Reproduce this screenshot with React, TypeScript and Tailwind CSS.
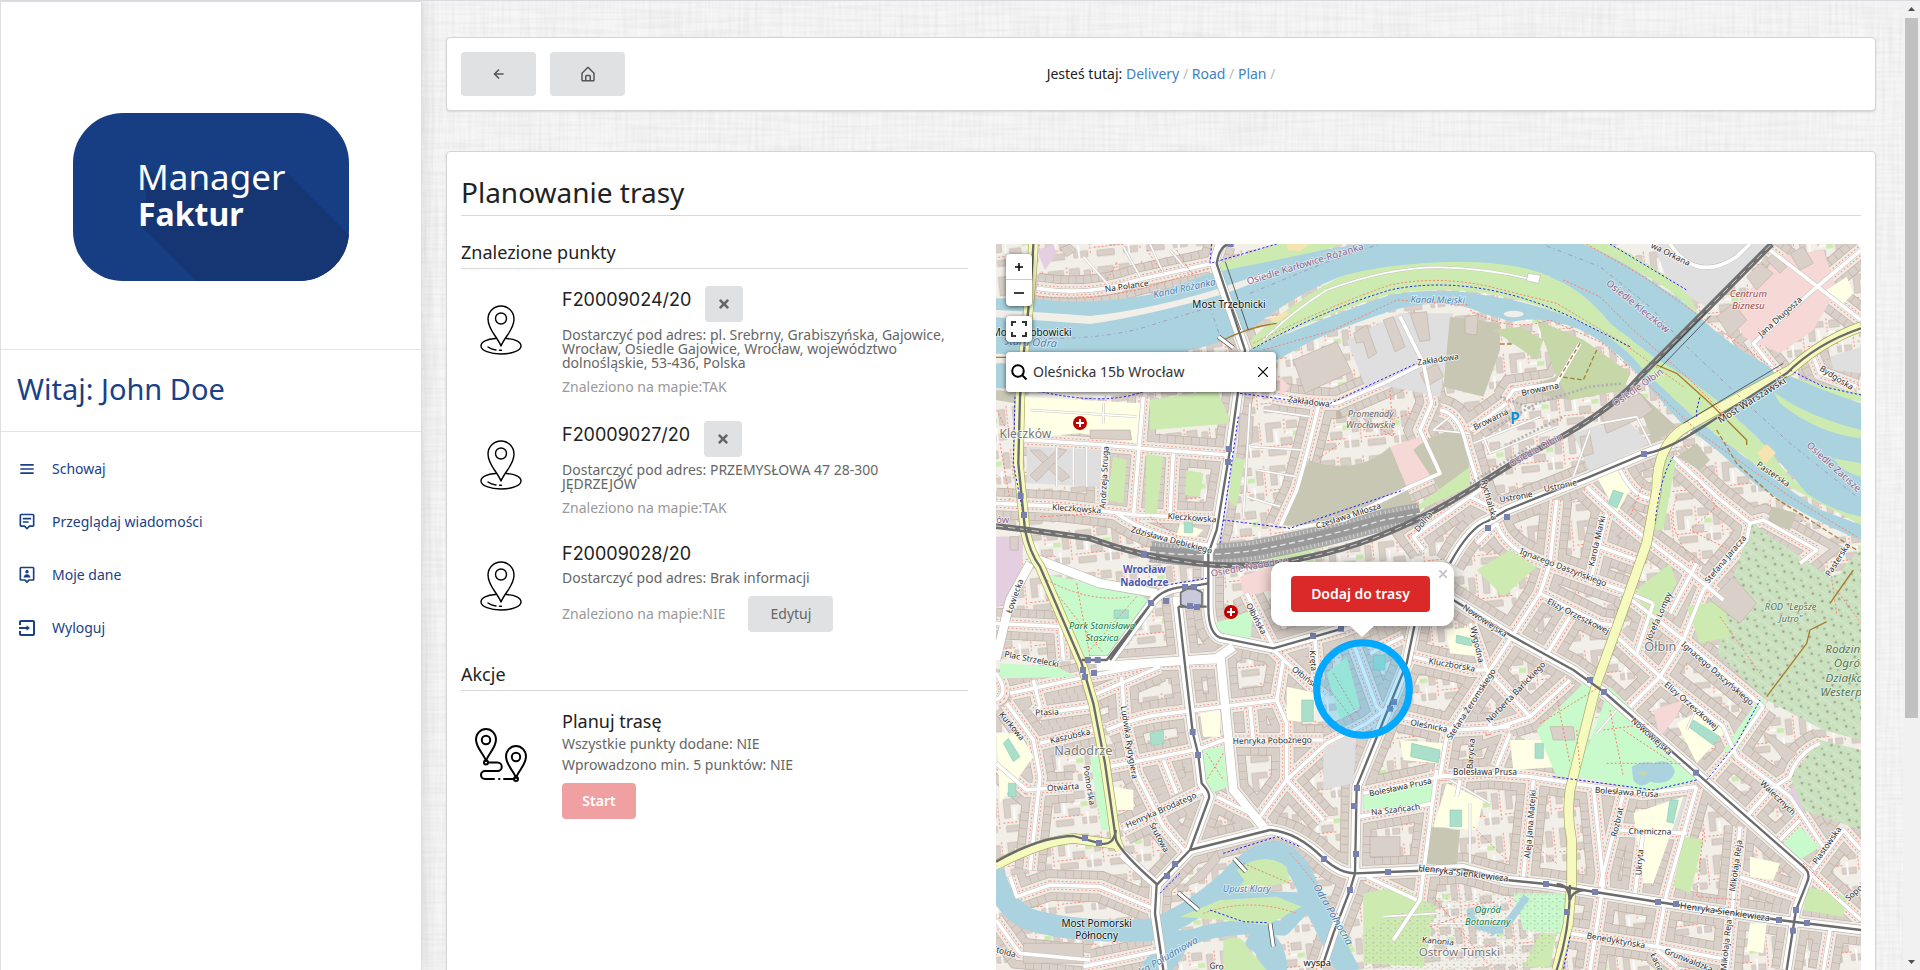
import type { ReactNode } from 'react';
import { BiHomeAlt, BiLeftArrowAlt, BiMenu, BiMessageAltDetail, BiUserPin } from 'react-icons/bi';
import { FaTimes } from 'react-icons/fa';

/* ---------- map data (coordinates are thirds of a pixel) ---------- */

const WATER = [
  'M18 205 L140 207 Q300 230 500 190 L660 130 Q860 90 1000 60 L1110 42 H1780 Q1900 90 2010 170 Q2080 210 2130 262 Q2220 350 2340 410 Q2460 470 2613 520 V860 Q2520 840 2450 790 Q2390 720 2300 620 L2180 510 Q2060 420 1990 380 L1860 280 Q1790 190 1700 150 Q1600 95 1400 95 Q1180 100 1050 140 Q900 200 780 300 Q680 350 520 375 Q300 400 130 385 L18 370 Z',
  'M765 365 Q980 270 1200 195 Q1350 170 1480 195 Q1660 220 1800 290 Q1900 340 1960 420 L2110 560 Q2260 680 2350 745 L2480 835 L2613 885 V930 Q2480 880 2300 765 L2180 660 L2070 575 L1940 430 Q1860 340 1760 295 Q1650 255 1570 275 Q1500 260 1440 235 Q1340 205 1210 240 Q1060 290 960 335 L860 390 Z',
  'M18 400 H48 V475 H18 Z',
];

const GREEN = [
  'M780 330 Q900 220 1050 140 Q1180 95 1400 92 Q1600 92 1700 150 Q1790 190 1860 280 L1990 380 Q2080 420 2190 520 L2300 620 L2400 740 Q2500 835 2613 860 V885 L2350 745 L2110 560 L1960 420 Q1880 330 1800 290 Q1650 215 1480 188 Q1350 170 1200 192 Q980 260 790 355 Z',
  'M1780 42 H1860 Q2010 110 2100 200 L2130 262 Q2060 190 1990 150 Z',
  'M690 100 L860 42 H1060 Q900 90 690 140 Z',
  'M480 510 L680 480 L725 580 L480 600 Z',
  'M470 670 L520 680 L500 850 L465 850 Z',
  'M590 720 L640 730 L630 800 L585 795 Z',
  'M700 945 L890 930 Q1140 900 1250 850 L1440 710 L1440 770 L1200 880 L900 990 L700 990 Z',
  'M370 680 L410 690 L400 820 L350 810 Z',
  'M730 680 L765 690 L740 830 L715 810 Z',
  'M2420 490 Q2500 560 2613 590 V625 Q2500 620 2420 540 Z',
  'M2530 690 L2613 700 V740 Q2560 730 2530 690 Z',
  'M2000 680 L2060 680 L2020 900 L1990 900 Z',
  'M2390 440 L2613 490 L2613 515 L2400 470 Z',
  'M1460 1020 L1560 960 L1640 1010 L1540 1100 Z',
  'M1940 1080 L2040 1000 L2060 1060 L1980 1200 Z',
  'M2090 1130 L2200 1110 L2220 1220 L2130 1240 Z',
  'M740 1920 L860 1870 L960 1960 L1090 2150 L1050 2160 L960 2000 L900 1890 L700 2010 Z',
  'M600 2050 L820 1980 L900 2010 L920 2050 L820 2080 L640 2060 Z',
  'M760 1900 L880 1890 L900 1960 L780 1970 Z',
  'M2080 1820 L2140 1830 L2100 1990 L2050 1970 Z',
  'M1650 2110 L1700 2110 L1680 2210 L1600 2210 Z',
  'M1120 1990 L1220 1970 L1340 2030 L1300 2210 L1120 2200 Z',
  'M2450 1970 L2570 2000 L2560 2060 L2440 2040 Z',
];

const PARK = [
  'M150 1030 L450 1090 L480 1120 L360 1285 L290 1290 L220 1150 Z',
  'M1770 1370 Q1800 1320 1840 1350 L1770 1640 L1700 1640 L1640 1500 Z',
  'M1860 1370 L2120 1630 L2120 1650 L2000 1690 L1760 1640 Z',
  'M640 1560 L700 1550 L715 1670 L660 1690 L640 1640 Z',
  'M675 1180 L790 1140 L780 1240 L700 1230 Z',
  'M300 1580 L340 1580 L365 1800 L335 1800 Z',
  'M1120 1700 L1330 1640 L1320 1720 L1120 1740 Z',
  'M1570 1990 L1730 1990 L1720 2110 L1600 2100 Z',
  'M1010 1330 L1070 1280 L1110 1430 L1050 1470 Z',
  'M2200 1560 L2310 1400 L2330 1420 L2230 1580 Z',
  'M2380 1840 L2430 1790 L2490 1850 L2430 1890 Z',
  'M30 1300 L200 1310 L260 1340 L30 1345 Z',
];

const MEADOW = [
  'M955 690 Q1100 740 1200 650 L1270 820 L1100 900 L880 885 Z',
  'M1380 260 L1530 280 L1530 360 L1480 500 L1360 470 Z',
  'M1640 270 L1780 330 L1920 430 L1900 480 L1740 510 L1580 480 L1700 440 Z',
  'M1270 660 Q1360 580 1430 620 L1440 730 L1350 780 Z',
  'M1940 480 L2060 590 L1990 640 L1960 560 Z',
  'M2060 680 L2120 640 L2160 690 L2130 720 Z',
  'M1310 1790 L1410 1800 L1400 1910 L1300 1900 Z',
  'M18 480 L80 490 L75 520 L18 510 Z',
  'M2350 830 L2420 850 L2400 900 L2330 880 Z',
];

const GREY = [
  'M1070 330 L1230 250 L1390 250 L1350 500 L1200 470 L1130 480 Z',
  'M110 650 L330 660 L330 770 L110 760 Z',
  'M1990 42 L2340 42 L2150 230 L2040 170 Z',
  'M2520 380 L2613 350 V430 L2530 420 Z',
  'M1750 610 L1900 560 L1980 640 L1800 730 Z',
  'M1000 1560 L1100 1500 L1090 1660 L1000 1680 Z',
  'M2220 1080 L2300 1060 L2330 1100 L2280 1160 Z',
  'M2000 1720 L2090 1700 L2060 1800 L1990 1790 Z',
];

const PINK = [
  'M1200 650 L1290 620 L1350 740 L1250 770 Z',
  'M2230 240 L2360 80 L2500 60 L2540 180 L2470 300 L2370 370 L2260 320 Z',
  'M870 440 L900 470 L870 500 Z',
  'M1990 1440 L2080 1410 L2060 1460 L2010 1520 Z',
  'M750 1040 L840 1010 L850 1080 L760 1100 Z',
];

const LILAC = ['M18 920 L100 920 L95 1040 L60 1120 L18 1130 Z', 'M140 60 L190 42 L200 70 L165 120 Z', 'M2390 1690 L2420 1660 L2460 1730 L2440 1750 Z'];

const SCHOOL = [
  'M105 500 L450 520 L440 640 L270 610 L100 625 Z',
  'M630 1450 L690 1440 L690 1520 L640 1520 Z',
  'M890 1370 L980 1390 L970 1480 L890 1470 Z',
  'M1370 1660 L1480 1710 L1460 1800 L1330 1790 Z',
  'M1230 1530 L1360 1540 L1340 1600 L1240 1590 Z',
  'M2060 1480 L2130 1440 L2210 1500 L2120 1600 Z',
  'M1820 740 L1890 720 L1920 780 L1880 850 Z',
  'M1560 1530 L1730 1530 L1710 1610 L1570 1620 Z',
  'M1930 1750 L2080 1700 L2060 1760 L1990 1960 L1960 1960 Z',
  'M2280 1880 L2370 1900 L2350 1950 L2280 1940 Z',
  'M2280 2080 L2330 2080 L2320 2170 L2270 2160 Z',
  'M2510 180 L2570 140 L2590 190 L2550 230 Z',
  'M20 1510 L90 1510 L130 1580 L30 1720 Z',
  'M1370 1200 L1450 1190 L1480 1280 L1380 1270 Z',
  'M370 1670 L430 1680 L430 1740 L380 1740 Z',
  'M570 880 L640 900 L620 920 L560 915 Z',
];

const PITCH = [
  'M935 1410 H970 V1475 H935 Z',
  'M372 1140 H415 V1165 H372 Z',
  'M480 1510 L520 1500 L522 1540 L484 1548 Z',
  'M1265 1540 L1350 1560 L1345 1598 L1262 1580 Z',
  'M1380 1740 H1415 V1790 H1380 Z',
  'M1635 1540 H1660 V1585 H1635 Z',
  'M2110 1470 L2190 1520 L2170 1545 L2095 1490 Z',
  'M1870 780 L1900 790 L1880 835 L1855 820 Z',
  'M583 878 H608 V908 H583 Z',
  'M40 1540 L55 1525 L90 1580 L70 1595 Z',
  'M55 1660 H78 V1700 H55 Z',
  'M1400 1215 L1450 1228 L1445 1248 L1398 1238 Z',
  'M1150 1275 H1185 V1320 H1150 Z',
  'M2040 1710 L2065 1710 L2050 1780 L2030 1775 Z',
];

const LARGE_BUILDINGS = [
  'M910 390 L1040 335 L1085 425 L945 490 Z',
  'M1090 310 L1130 285 L1160 370 L1135 385 L1120 335 L1100 340 Z',
  'M1180 270 L1210 260 L1245 350 L1215 365 Z',
  'M1260 250 L1310 245 L1320 330 L1290 335 Z',
  'M1290 430 L1340 400 L1360 440 L1310 470 Z',
  'M1425 260 L1465 255 L1460 315 L1425 310 Z',
  'M300 600 L420 600 L425 630 L300 625 Z',
  'M120 660 L150 660 L240 740 L215 755 Z',
  'M230 660 L205 655 L120 735 L140 755 Z',
  'M750 550 L790 560 L785 640 L745 650 Z',
  'M1830 540 L1950 490 L1990 540 L1960 560 L1850 610 Z',
  'M1770 620 L1800 615 L1810 670 L1780 680 Z',
  'M2270 140 L2310 100 L2350 130 L2300 180 Z',
  'M2330 90 L2350 70 L2390 110 L2370 130 Z',
  'M2400 70 L2440 50 L2470 100 L2430 120 Z',
  'M2180 260 L2230 220 L2270 270 L2220 320 Z',
  'M60 920 H85 V960 H60 Z',
  'M1680 1490 L1750 1490 L1755 1530 L1690 1530 Z',
  'M210 55 L240 42 L260 60 L230 80 Z',
  'M2160 1110 L2230 1040 L2300 1120 L2250 1180 Z',
  'M580 1970 L600 1950 L650 1900 L680 1860 L690 1890 L640 1950 Z',
  'M100 2140 H280 V2200 H100 Z',
  'M1140 1820 H1230 V1880 H1140 Z',
  'M2310 1500 L2350 1520 L2420 1570 L2390 1600 Z',
];

// residential streets; rows of houses are drawn along both kerbs
const STREETS = [
  'M100 630 Q300 640 450 655 L715 675', 'M18 820 L220 830 L440 855 L690 865', 'M460 500 L430 860', 'M550 670 L540 850',
  'M380 850 Q450 900 560 930 L680 950', 'M340 640 L335 820', 'M985 530 Q950 680 920 780 L870 890', 'M850 500 Q950 520 1040 520 L1180 460 L1300 400',
  'M18 1180 L210 1190 M210 1170 L220 1290', 'M18 1330 Q60 1390 18 1410 M60 1390 L290 1340 L500 1300 L680 1295', 'M300 1400 L510 1310',
  'M50 1420 L130 1530 L150 1640 L120 1920', 'M130 1350 L150 1430 L130 1450 M150 1450 L300 1430', 'M150 1540 L310 1500', 'M18 1600 L110 1680 L250 1670',
  'M395 1340 L405 1480 L440 1630 L520 1790 L590 1870', 'M350 1500 Q440 1460 540 1450 L700 1430 L860 1410', 'M360 1610 L610 1560', 'M400 1800 L500 1750 L640 1680',
  'M520 1590 L560 1690', 'M860 1410 L880 1290 M860 1410 L890 1480 L890 1650', 'M620 1560 L700 1530 L1000 1530', 'M890 1650 L1010 1540 L1130 1480 L1210 1420',
  'M890 1650 L810 1760 M890 1650 L1000 1770', 'M780 1430 L790 1530', 'M1120 1690 L1350 1640 L1400 1635', 'M1110 1760 L1330 1720', 'M1340 1620 L1290 2010 L1210 2130',
  'M850 1260 L1000 1400 M850 1260 L1060 1200', 'M770 1090 L850 1250', 'M975 1230 L985 1350', 'M1090 1240 L1160 1430 L1200 1460', 'M1270 1280 L1440 1320 L1490 1320',
  'M1230 1460 L1400 1500 L1560 1490', 'M1440 1180 L1490 1320 L1620 1460', 'M1650 1090 L1500 1320 L1370 1520 L1350 1640', 'M1740 1350 L1620 1460 L1500 1500 L1500 1480', 'M1560 1510 L1520 1610',
  'M1350 1640 L1500 1630 L1620 1640 L1750 1660 L1960 1690 L2120 1670', 'M1410 1650 L1400 1700', 'M1630 1650 L1600 1940', 'M1810 1670 L1840 1960 L1800 2220', 'M1900 1690 L1830 1970',
  'M1960 1800 L1935 1990', 'M2120 1670 L2030 1990 L2000 2150', 'M1890 1800 L2090 1810', 'M2250 1790 L2210 2220', 'M2160 1640 L2230 1560 L2320 1430', 'M1920 1430 L2010 1340 L2080 1230 L2140 1080',
  'M1880 1220 L2010 1340 L2200 1490 L2240 1580 L2400 1700 L2500 1850', 'M1900 1090 L2080 1230 L2320 1430', 'M2270 1760 L2340 1680 L2400 1640 Q2420 1570 2490 1540', 'M2370 1830 L2430 1770',
  'M1990 1120 L1940 1270', 'M1650 1090 L1830 1180 L1900 1190', 'M1700 810 L1680 1000 L1650 1090', 'M1520 880 Q1540 950 1640 990 L1920 1090 L1990 1120', 'M1740 1160 L1660 1290',
  'M1790 770 Q1900 880 2080 1010 L2200 1110', 'M1850 850 L1800 1060', 'M1890 720 Q1930 800 1980 805', 'M1830 950 L1940 990', 'M2050 680 L2180 800 L2280 880 L2270 930 L2140 1080 M2280 880 L2320 870 L2480 960 L2430 1000',
  'M2120 1000 L2040 1150', 'M1350 540 Q1410 550 1430 650 L1470 780 L1440 800', 'M1300 400 L1325 520 L1290 600 L1350 730 L1260 770 L1060 870 L880 900', 'M1230 260 L1300 400', 'M1550 510 L1570 480 L1700 460 L1770 340',
  'M1440 600 L1550 520', 'M2613 60 L2470 180 L2290 340 L2370 440', 'M2340 60 L2613 270', 'M2040 42 Q2120 160 2240 80 L2280 42', 'M2470 380 L2490 430 L2600 470', 'M1440 800 L1270 920 L1300 960', 'M1440 800 L1540 850',
  'M140 175 Q300 200 440 150 L670 100', 'M60 1940 L80 2000 L180 1965 L330 1970 L500 2040', 'M18 2070 L90 2170 L300 2190', 'M280 2210 L520 2160', 'M680 1700 L800 1760 L830 1790',
  'M1130 1940 L1280 2010', 'M1740 2110 L2000 2150 L2220 2190', 'M2470 1920 L2560 1800 L2613 1860', 'M2460 1930 L2613 2070', 'M2250 1940 L2430 2000', 'M2520 2100 L2500 2220', 'M2000 2160 L2060 2210', 'M1460 940 L1520 880',
  'M1140 1270 L1240 1220 M1060 1200 L1190 1150',
];

const WIDE_ROADS = [
  'M690 42 L672 100 L765 360 L745 480 L720 660 L680 900 L655 970 L655 1130 Q660 1220 700 1225 L850 1255 L1060 1195',
  'M560 1100 L608 1506 L625 1575 L635 1660 L658 1700 L600 1860 L500 1965 L495 2050 L520 2220', 'M690 1270 L730 1680 L820 1790', 'M320 1310 L680 1285 L730 1250',
  'M600 1860 L840 1800 Q920 1810 1000 1885 Q1050 1930 1095 1930 L1194 1926 L1420 1915 L1550 1950 L1668 1962 L1815 1986 L2004 2016 L2367 2070 L2613 2100',
  'M1275 1180 L1250 1300 L1100 1670 L1095 1930 L1080 1980 L1030 2110 L1000 2200',
  'M1380 1000 Q1440 890 1494 873 L1550 840 Q1700 780 1800 740 L1962 672 L2050 640',
  'M1300 1050 L1390 1110 L1560 1215 L1750 1320 L1842 1386 L2118 1628 L2458 1930 L2418 2040 L2390 2220',
  'M485 1120 L360 1290 L300 1290', 'M485 1118 Q520 1070 600 1070 L655 1060', 'M395 1870 L500 1965', 'M18 1290 L60 1110 L120 1000', 'M120 980 L330 1060 L500 1090',
];

const YELLOW_ROADS = [
  'M130 42 Q125 160 105 330 L90 500 L85 700 L105 900 Q120 970 150 1010 L275 1300 L310 1420 L345 1600 L378 1830 L390 1860',
  'M18 1905 Q150 1835 250 1825 L390 1845',
  'M2613 290 Q2500 330 2400 420 L2250 500 L2090 590 Q2000 640 2000 780 L1970 940 L1910 1110 L1820 1360 L1740 1680 Q1730 1760 1745 1830 V1960 L1735 2080 L1700 2220',
];

const TRAMS = [
  'M130 42 Q125 160 105 330 L90 500 L85 700 L105 900 Q120 970 150 1010 L275 1300 L310 1420 L345 1600 L378 1830 Q395 1870 500 1962 L495 2050 L520 2220',
  'M18 1895 Q150 1820 250 1818 L330 1840 Q370 1850 378 1800',
  'M722 42 Q690 42 680 100 L765 360 L745 480 L720 660 L680 900 L655 970 L655 1130 Q655 1220 700 1225 L850 1255 L1060 1195',
  'M565 1130 L608 1506 L625 1575 L635 1660 Q665 1690 655 1710 L600 1860 L500 1965', 'M360 1290 L485 1118 Q520 1070 600 1070 L655 1060 M275 1290 H350 L485 1118 M565 1130 H650',
  'M600 1860 L840 1800 Q920 1805 1000 1885 Q1050 1930 1095 1930 L1194 1926 L1420 1918 L1550 1950 L1668 1962 L1815 1986 L2004 2016 L2367 2070 L2613 2100',
  'M1275 1180 L1250 1300 L1100 1670 L1095 1930 L1080 1980 L1030 2110 L1000 2200',
  'M1380 1000 Q1440 890 1494 873 L1550 840 Q1700 780 1800 740 L1962 672 Q2040 660 2170 570 L2390 430 Q2480 340 2613 295',
  'M1300 1050 L1390 1110 L1560 1215 L1750 1320 L1842 1386 L2118 1628 L2440 1910 Q2465 1930 2450 1960 L2418 2040 L2390 2220',
  'M1740 1965 Q1740 2100 1700 2220 M1700 1962 Q1740 1965 1738 2010 M1780 1980 Q1745 1985 1740 2010',
];

const RAIL = 'M18 888 L100 898 L300 925 Q450 980 620 1000 Q800 1020 960 980 Q1200 930 1440 780 L1600 680 Q1850 560 1950 440 L2345 42';
const YARD = 'M480 965 Q640 985 800 960 Q1010 920 1180 870 L1290 850';

const CYCLE = [
  'M75 500 L70 700 L105 880', 'M130 480 Q340 530 460 485', 'M750 490 L1010 525 L1280 400', 'M745 560 L690 940', 'M700 870 L900 895 L1240 780', 'M790 355 Q1000 240 1200 180 Q1340 150 1500 180 Q1650 210 1780 280 L1920 350',
  'M1860 42 L2090 180', 'M2120 560 V540 L2130 500', 'M2050 680 Q2010 740 1995 880', 'M1690 1640 L1990 1680 L2120 1650 M2150 1650 L2240 1540 L2310 1410', 'M2400 420 L2500 470 L2613 495', 'M700 1870 L860 1820 L930 1850', 'M660 2040 L760 2075 L830 2078', 'M510 1990 L570 1930', 'M665 42 L660 100 L860 42', 'M1740 2120 L1720 2220', 'M530 1065 L650 1045',
];

const FOOT = [
  'M145 200 Q320 210 460 175 L660 115', 'M170 1050 Q300 1120 420 1100 M200 1090 L340 1270 M260 1060 L300 1280 M440 1100 L300 1260', 'M790 340 Q1000 235 1200 165 Q1340 135 1500 170 L1700 220 L1900 340 L2080 470', 'M820 360 L1030 300 L1220 210 L1440 225 M1440 240 Q1560 310 1680 270 L1840 340 L1960 450 L2130 610 L2400 800 L2600 920',
  'M1790 42 L1960 140 L2090 230 L2260 350 L2400 450', 'M1720 150 L1830 200 L1930 300 L2090 440 L2210 560', 'M1650 1480 L1830 1370 M1760 1500 L1770 1620 M1700 1400 L1740 1600 M1860 1440 L1900 1640 M1850 1600 L2080 1600 M1900 1500 L2050 1600 M1840 1500 L1990 1480', 'M650 1570 L700 1650 M700 1570 L650 1650',
  'M1020 1380 L1090 1470 M1030 1330 L1100 1450', 'M760 1900 L900 1960 M640 2050 Q780 2000 920 2050 M900 1870 Q1000 1980 1060 2100', 'M1330 2000 L1500 2210 M1320 2090 L1440 2050', 'M2190 1160 L2310 1330 M2540 1080 L2613 1180 M2540 1150 L2520 1010', 'M2060 800 Q2020 900 2120 1000 M2120 750 L2180 830 L2100 900 L2220 960', 'M1960 760 L1920 860', 'M1200 480 L1210 620 L1110 560 M1120 600 L1260 550', 'M1050 640 L980 690', 'M480 860 L560 920 M150 860 L340 850',
  'M560 60 L610 140 M470 60 L520 130 M380 100 L350 150', 'M20 540 L60 620 M30 640 L60 810', 'M1700 1900 L1640 1850 M1450 1790 L1560 1900 M2140 1800 L2120 2000 L2250 2010', 'M2440 1900 L2550 2010',
];

const MINOR = [
  'M280 80 L360 170 M400 50 L450 140 M480 42 L520 130 M540 60 L590 120', 'M780 520 L760 860 M820 540 L960 560 M780 650 L940 660 M800 720 L920 740 M770 800 L870 830', 'M120 540 L440 560 M340 520 V580', 'M200 650 V770 M250 650 V770 M290 650 V770',
  'M820 330 Q900 250 1010 180 Q1200 110 1350 112 Q1500 115 1630 150', 'M1380 560 L1330 600 L1440 610', 'M1480 620 L1500 670 L1700 590 M1450 640 L1650 560', 'M1800 600 L1750 740 M1830 580 L1940 560 L1990 660', 'M2120 1430 L2090 1500 M1820 1510 L1880 1440', 'M1380 1650 L1500 1720 M1440 1720 V1900', 'M1320 2080 H1480 M1180 2060 L1340 2050',
];

const STOPS: [number, number][] = [
  [717, 657], [714, 696], [92, 798], [102, 855], [462, 974], [585, 1071], [612, 1071], [528, 1113], [483, 1119], [600, 1128], [621, 1131], [294, 1290], [323, 1290], [279, 1320], [285, 1341], [312, 1329], [969, 1218], [1053, 1196],
  [608, 1506], [624, 1575], [285, 1824], [327, 1839], [555, 1902], [531, 1938], [1002, 1887], [1101, 1674], [1092, 1728], [1098, 1872], [1080, 1980], [1194, 1926], [1212, 1416], [1200, 1436],
  [1494, 894], [1551, 861], [1962, 672], [1800, 1350], [1842, 1386], [2118, 1628], [1668, 1962], [1731, 2046], [1815, 1986], [2004, 2016], [2058, 2022], [2367, 2070], [2418, 2040], [2451, 2079], [2409, 2102], [722, 42],
];

type Label = [text: string, x: number, y: number, size: number, angle: number, kind?: 'street' | 'water' | 'area' | 'district' | 'park' | 'station' | 'place' | 'garden' | 'biz' | 'mall'];

const LABELS: Label[] = [
  ['Na Polance', 410, 168, 25, -8], ['Kleczkowska', 260, 836, 25, 4], ['Kleczkowska', 606, 863, 25, 4], ['Andrzeja Struga', 342, 742, 25, -87], ['Zdzisława Dębickiego', 545, 930, 25, 15],
  ['Zakładowa', 957, 515, 25, 7], ['Zakładowa', 1344, 388, 25, -9], ['Czesława Miłosza', 1075, 857, 25, -18], ['Dolna', 1300, 875, 25, -50], ['Browarna', 1650, 477, 25, -12], ['Browarna', 1502, 568, 25, -26],
  ['Rychtalska', 1498, 810, 25, 75], ['Ustronie', 1578, 800, 25, -10], ['Ustronie', 1711, 767, 25, -12], ['Ignacego Daszyńskiego', 1720, 1012, 25, 21], ['Karola Miarki', 1820, 933, 25, -77], ['Stefana Jaracza', 2206, 987, 25, -50],
  ['Pasterska', 2350, 732, 25, 34], ['Pasterska', 2543, 988, 25, -57], ['Bydgoska', 2540, 443, 25, 32], ['Jana Długosza', 2370, 260, 25, -42], ['wa Orkana', 2042, 72, 25, 26], ['Most Warszawski', 2285, 510, 29, -32],
  ['Elizy Orzeszkowej', 1765, 1158, 25, 27], ['Nowowiejska', 1485, 1172, 25, 34], ['Wygodna', 1462, 1243, 25, 77], ['Józefa Lompy', 2006, 1159, 25, -66], ['Norberta Barlickiego', 1577, 1386, 25, -46], ['Kluczborska', 1386, 1304, 25, 10],
  ['Stefana Żeromskiego', 1443, 1422, 25, -57], ['Ignacego Daszyńskiego', 2183, 1330, 25, 41], ['Elizy Orzeszkowej', 2105, 1427, 25, 41], ['Nowowiejska', 1985, 1519, 25, 42], ['Barycka', 1442, 1571, 25, -86], ['Bolesława Prusa', 1485, 1627, 25, 0],
  ['Bolesława Prusa', 1910, 1686, 25, 4], ['Bolesława Prusa', 1231, 1671, 25, -12], ['Na Szańcach', 1217, 1738, 25, -7], ['Aleja Jana Matejki', 1620, 1782, 25, -85], ['Rozbrat', 1881, 1776, 25, -77], ['Chemiczna', 1980, 1804, 25, 1], ['Ukryta', 1948, 1897, 25, -85],
  ['Mikołaja Reja', 2237, 1907, 25, -82], ['Mikołaja Reja', 2208, 2145, 25, -84], ['Walecznych', 2364, 1703, 25, 44], ['Piastowska', 2510, 1846, 25, -55], ['Sopocka', 2606, 1975, 25, -42], ['Henryka Sienkiewicza', 2205, 2045, 27, 8],
  ['Henryka Sienkiewicza', 1420, 1929, 27, 7], ['Benedyktyńska', 1878, 2131, 25, 10], ['Grunwaldzka', 2096, 2190, 25, 22], ['Kanonia', 1344, 2133, 25, 5], ['Łaciarska', 2012, 2220, 25, 65],
  ['Ołbińska', 799, 1166, 25, 62], ['Ołbińska', 950, 1345, 25, 38], ['Kręta', 970, 1292, 25, 86], ['Oleśnicka', 1317, 1487, 25, 11], ['Plac Strzelecki', 125, 1287, 25, 11], ['Ptasia', 171, 1446, 25, -2], ['Kurkowa', 66, 1488, 25, 50],
  ['Kaszubska', 240, 1518, 25, -13], ['Ludwika Rydygiera', 418, 1537, 25, 81], ['Pomorska', 298, 1666, 25, 81], ['Otwarta', 219, 1671, 25, -4], ['Henryka Brodatego', 513, 1740, 25, -24], ['Śrutowa', 508, 1822, 25, 62], ['Henryka Pobożnego', 847, 1531, 25, -1],
  ['Łowiecka', 74, 1098, 25, -70], ['Witolda', 34, 2162, 25, 16], ['Gro', 680, 2208, 25, 5],
  ['Most Trzebnicki', 717, 224, 30, 0, 'place'], ['Most Osobowicki', 125, 307, 30, 0, 'place'], ['Most Pomorski', 320, 2080, 30, 0, 'place'], ['Północny', 320, 2117, 30, 0, 'place'], ['wyspa', 982, 2199, 28, 0, 'place'],
  ['Kanał Różanka', 583, 174, 29, -12, 'water'], ['Stara Odra', 121, 336, 33, 3, 'water'], ['Kanał Miejski', 1343, 209, 28, 1, 'water'], ['Upust Klary', 770, 1977, 28, 0, 'water'], ['Odra Północna', 1030, 2053, 31, 60, 'water'], ['Odra Południowa', 520, 2185, 30, -30, 'water'],
  ['Osiedle Karłowice-Różanka', 945, 101, 29, -17, 'district'], ['Osiedle Nadodrze', 778, 1010, 28, -10, 'district'], ['Osiedle Ołbin', 1637, 660, 28, -29, 'district'], ['Osiedle Ołbin', 1943, 472, 28, -35, 'district'], ['Osiedle Kleczków', 1944, 228, 29, 39, 'district'], ['Osiedle Zacisze', 2532, 710, 29, 42, 'district'], ['ów', 38, 868, 28, 0, 'district'],
  ['Kleczków', 106, 612, 36, 0, 'area'], ['Nadodrze', 280, 1560, 38, 0, 'area'], ['Ołbin', 2011, 1249, 38, 0, 'area'], ['Ostrów Tumski', 1408, 2165, 35, 0, 'area'],
  ['Park Stanisława', 336, 1188, 28, 0, 'park'], ['Staszica', 336, 1223, 28, 0, 'park'], ['Ogród', 1493, 2038, 28, 0, 'park'], ['Botaniczny', 1493, 2074, 28, 0, 'park'],
  ['Wrocław', 463, 1018, 30, 0, 'station'], ['Nadodrze', 463, 1057, 30, 0, 'station'],
  ['Promenady', 1142, 551, 27, 0, 'mall'], ['Wrocławskie', 1142, 584, 27, 0, 'mall'],
  ['ROD "Lepsze', 2402, 1130, 28, 0, 'garden'], ['Jutro"', 2402, 1166, 28, 0, 'garden'], ['Rodzinne', 2577, 1256, 35, 0, 'garden'], ['Ogródki', 2594, 1299, 35, 0, 'garden'], ['Działkowe', 2584, 1342, 35, 0, 'garden'], ['Westerplatte', 2588, 1385, 35, 0, 'garden'],
  ['Centrum', 2275, 190, 29, 0, 'biz'], ['Biznesu', 2275, 226, 29, 0, 'biz'],
];

const LABEL_STYLE: Record<string, string> = {
  street: 'fill-[#2b2b2b] stroke-white/80',
  place: 'fill-[#111111] stroke-white/60',
  water: 'fill-[#4d80b3] stroke-white/60 italic',
  district: 'fill-[#8d618b] stroke-white/60',
  area: 'fill-[#777777] stroke-white/80',
  park: 'fill-[#0f7a45] stroke-white/60 italic',
  station: 'fill-[#4b57ad] stroke-white/80 font-bold',
  garden: 'fill-[#557755] stroke-white/50 italic',
  biz: 'fill-[#9a4a4a] stroke-white/60 italic',
  mall: 'fill-[#666666] stroke-white/60 italic',
};

function Shapes({ paths, className }: { paths: string[]; className: string }) {
  return (
    <g className={className}>
      {paths.map((d) => (
        <path key={d} d={d} />
      ))}
    </g>
  );
}

function CityMap() {
  return (
    <svg viewBox="18 42 2595 2178" className="block h-auto w-full font-['Noto_Sans',sans-serif]" role="img" aria-label="Mapa Wrocławia">
      <defs>
        <pattern id="blocks" width="150" height="130" patternUnits="userSpaceOnUse" patternTransform="rotate(-6)">
          <path d="M10 14h46v16H28v40H10zM74 12h30v22H74zM118 20h18v46h-18zM52 62h34v20H52zM12 94h52v18H12zM92 92h42v18H92z" fill="#d9d0c9" stroke="#c5b7ab" strokeWidth="2" />
          <path d="M40 40v36M64 48h44M108 74v40" fill="none" stroke="#fff" strokeWidth="5" />
          <path d="M66 6v42M4 84h90M142 10v90" fill="none" stroke="#fa8072" strokeWidth="3" strokeDasharray="6 6" />
          <path d="M90 44h22v14H90z" fill="#cdebb0" />
        </pattern>
        <pattern id="allotments" width="36" height="36" patternUnits="userSpaceOnUse" patternTransform="rotate(38)">
          <rect width="36" height="36" fill="#c9e1bf" />
          <path d="M0 0h36" stroke="#dfe9d2" strokeWidth="4" />
          <circle cx="9" cy="14" r="3.5" fill="#a9b596" />
          <circle cx="25" cy="24" r="4" fill="#a79f8f" />
          <circle cx="20" cy="9" r="2" fill="#eef7e8" />
        </pattern>
        <pattern id="grove" width="22" height="22" patternUnits="userSpaceOnUse">
          <path d="M3 4h4v3M14 12l4 2M6 16h3" stroke="#b5b9a8" strokeWidth="3" fill="none" />
        </pattern>
      </defs>
      <rect x="18" y="42" width="2595" height="2178" fill="#f2efe9" />
      <rect x="18" y="42" width="2595" height="2178" fill="url(#blocks)" />

      <g fill="none">
        <Shapes paths={[...STREETS, ...WIDE_ROADS.slice(0, 8)]} className="stroke-[#c3b4a8] [stroke-width:94]" />
        <Shapes paths={[...STREETS, ...WIDE_ROADS.slice(0, 8)]} className="stroke-[#d9d0c9] [stroke-width:89] [stroke-dasharray:22_2]" />
        <Shapes paths={[...STREETS, ...WIDE_ROADS.slice(0, 8)]} className="stroke-[#c3b4a8] [stroke-width:46]" />
        <Shapes paths={[...STREETS, ...WIDE_ROADS.slice(0, 8)]} className="stroke-[#eeeae4] [stroke-width:42]" />
        <Shapes paths={STREETS} className="stroke-[#fa8f83] [stroke-width:27] [stroke-dasharray:5_7]" />
        <Shapes paths={STREETS} className="stroke-[#eeeae4] [stroke-width:21]" />
      </g>

      <Shapes paths={GREY} className="fill-[#dfdfdf]" />
      <Shapes paths={PINK} className="fill-[#f6d8d6]" />
      <Shapes paths={LILAC} className="fill-[#e3cfe0]" />
      <Shapes paths={MEADOW} className="fill-[#c7c7b4]" />
      <path d="M1640 270 L1780 330 L1920 430 L1900 480 L1740 510 L1700 440 Z M1510 300 l80 -10 l70 40 l-20 60 Z" fill="#c6d8a8" />
      <Shapes paths={SCHOOL} className="fill-[#ffffe5]" />
      <path d="M2613 960 L2560 1010 L2520 1120 L2440 1080 L2290 870 L2180 1180 L2320 1400 L2420 1440 L2500 1500 L2613 1530 Z M2613 1560 L2490 1530 L2400 1640 L2440 1740 L2613 1800 Z" fill="url(#allotments)" />
      <path d="M2270 960 L2310 900 L2520 1040 L2613 1010 V1450 L2500 1500 L2330 1410 L2180 1270 Z" fill="url(#allotments)" />
      <Shapes paths={GREEN} className="fill-[#cdebb0]" />
      <Shapes paths={PARK} className="fill-[#c8facc]" />
      <path d="M1360 1990 L1730 1990 L1700 2120 L1600 2220 L1120 2220 L1120 2100 Z" fill="url(#grove)" />
      <Shapes paths={PITCH} className="fill-[#aae0cb] stroke-[#8fcdb6] [stroke-width:2]" />
      <Shapes paths={LARGE_BUILDINGS} className="fill-[#d9d0c9] stroke-[#c1b0a3] [stroke-width:2]" />

      <Shapes paths={WATER} className="fill-[#aad3df]" />
      <path d="M18 240 Q150 245 300 258 Q480 240 690 175 Q790 140 860 120 Q790 165 690 195 Q460 260 300 282 L18 262 Z" fill="#f2efe9" />
      <path d="M2350 485 Q2450 560 2613 600 V625 Q2480 610 2370 520 Z M2530 685 L2613 700 V740 Q2560 730 2530 685 Z" fill="#cdebb0" />
      <ellipse cx="1571" cy="252" rx="30" ry="10" fill="#f2efe9" />
      <path d="M890 42h70l-30 22-36-4zM835 270l50-24 16 4-40 26zM2300 670l30-28 28 26-32 34z" fill="#f5e3b0" />
      <g fill="none" strokeLinejoin="round" className="stroke-[#aad3df]">
        <path d="M10 1920 Q30 2020 110 2065 Q240 2110 480 2100 Q600 2060 720 1950 Q790 1870 860 1865 Q920 1880 960 1990 Q1000 2080 1080 2230" strokeWidth="66" />
        <path d="M480 2100 Q560 2140 640 2110 Q760 2080 880 2095 L960 2010 L690 2000" strokeWidth="44" />
        <path d="M560 2130 Q520 2200 480 2230 M780 2110 Q860 2150 850 2230" strokeWidth="80" />
        <path d="M1610 2000 L1560 2070 L1500 2110 M1440 2040 Q1440 2100 1540 2100" strokeWidth="22" />
      </g>
      <path d="M1925 1610 Q1960 1590 1990 1600 Q2040 1580 2055 1625 Q2040 1670 1980 1655 Q1950 1680 1930 1650 Z" fill="#aad3df" />
      <path d="M1942 1630l16-7 18 6-16 8z" fill="#c6d8a8" />
      <path d="M570 2060 L690 2010 L860 2000 L935 2030 L830 2085 L700 2070 Z M740 1920 Q820 1860 890 1910 L900 1960 L770 1960 Z M700 2130 Q760 2110 770 2150 L830 2220 L700 2220 Z" fill="#cdebb0" />

      <g fill="none" strokeLinejoin="round">
        <Shapes paths={MINOR} className="stroke-[#c9c4be] [stroke-width:8]" />
        <Shapes paths={MINOR} className="stroke-white [stroke-width:5]" />
        <path d={YARD} className="stroke-[#a9a9a9] [stroke-width:64]" />
        <path d={YARD} className="stroke-[#d5d3cf] [stroke-width:56] [stroke-dasharray:3_9]" />
        <path d={YARD} className="stroke-[#9a9a9a] [stroke-width:34]" />
        <path d={YARD} className="stroke-[#e2e2e2] [stroke-width:4] [stroke-dasharray:18_10]" />
        <Shapes paths={STREETS} className="stroke-[#c8c3bd] [stroke-width:14]" />
        <Shapes paths={WIDE_ROADS} className="stroke-[#bdb8b2] [stroke-width:30]" />
        <Shapes paths={STREETS} className="stroke-white [stroke-width:11]" />
        <Shapes paths={WIDE_ROADS} className="stroke-white [stroke-width:26]" />
        <Shapes paths={YELLOW_ROADS} className="stroke-[#a8a868] [stroke-width:31]" />
        <Shapes paths={YELLOW_ROADS} className="stroke-[#f7fabf] [stroke-width:27]" />
        <Shapes paths={FOOT} className="stroke-[#fa8072] [stroke-width:3] [stroke-dasharray:6_6]" />
        <Shapes paths={CYCLE} className="stroke-[#2020ff] [stroke-width:3] [stroke-dasharray:7_6]" />
        <path d="M700 330 Q780 290 860 280 M2000 405 L2060 430 L2160 520 L2270 630 L2270 645 M2330 1400 L2450 1240 L2460 1200 L2510 1175 M2520 1120 L2590 1020 M18 382h30" className="stroke-[#aa7c28] [stroke-width:4]" />
        <path d="M2180 600 L2240 700 L2350 800 L2600 960 M1530 342h40 M1770 340 L1710 440 L1780 450 L1820 360" className="stroke-[#aa8438] [stroke-width:4] [stroke-dasharray:14_7]" />
        <path d="M140 325 Q360 330 500 280 L650 235 M660 230 L690 320 M780 190 L1000 100 L1170 42 M1670 48 L1830 110 L1980 230 L2080 340 L2270 520 L2400 640 L2600 800" className="stroke-[#9a86a8]/70 [stroke-width:3] [stroke-dasharray:12_10_3_10]" />
        <path d="M1500 600 L1640 520 L1800 470 L1900 460 M1440 760 L1620 650 M1530 500 L1640 540 M1560 640 L1720 560" className="stroke-[#b0b0b0] [stroke-width:8] [stroke-dasharray:6_7]" />
        <path d={RAIL} className="stroke-[#707070] [stroke-width:18]" />
        <path d={RAIL} className="stroke-white [stroke-width:2] [stroke-dasharray:22_14]" />
        <path d="M2000 400 L2150 245 M2012 412 L2162 257 M680 105 L752 300 M706 95 L775 300 M2080 580 L2380 400 M2100 610 L2390 440" className="stroke-[#222222] [stroke-width:2]" />
        <Shapes paths={TRAMS} className="stroke-[#6b6b6b] [stroke-width:7]" />
        <path d="M685 320l45 34M732 1885l36 40M565 1988l60 52M840 2080l10 70" className="stroke-[#444444] [stroke-width:14]" />
        <path d="M685 320l45 34M732 1885l36 40M565 1988l60 52M840 2080l10 70" className="stroke-white [stroke-width:10]" />
      </g>
      <path d="M572 1088q30-24 64 0v36q-30 16-64 0z" fill="#c9c9dc" stroke="#707070" strokeWidth="5" />
      <path d="M1615 130l36 6-6 24-36-8z" fill="#fff" stroke="#bbb" strokeWidth="2" />
      {STOPS.map(([x, y]) => (
        <rect key={`${x}-${y}`} x={x - 9} y={y - 9} width="18" height="18" fill="#7981b0" />
      ))}
      {[
        [270, 579],
        [723, 1146],
      ].map(([x, y]) => (
        <g key={x}>
          <circle cx={x} cy={y} r="21" fill="#bf0000" />
          <path d={`M${x - 12} ${y}h24M${x} ${y - 12}v24`} stroke="#fff" strokeWidth="6" />
        </g>
      ))}
      <text x="1575" y="583" fontSize="46" textAnchor="middle" className="fill-[#0092da] font-semibold">
        P
      </text>
      {LABELS.map(([text, x, y, size, angle, kind]) => (
        <text
          key={`${text}-${x}`}
          x={x}
          y={y}
          dy="0.36em"
          fontSize={size}
          textAnchor="middle"
          strokeWidth="5"
          paintOrder="stroke"
          strokeLinejoin="round"
          transform={`rotate(${angle} ${x} ${y})`}
          className={LABEL_STYLE[kind ?? 'street']}
        >
          {text}
        </text>
      ))}
      <circle cx="1119" cy="1377" r="139" fill="#03a9ff" fillOpacity="0.25" stroke="#03a9ff" strokeWidth="21" />
    </svg>
  );
}

/* ---------- icons ---------- */

function ExitIcon() {
  return (
    <svg viewBox="0 0 20 20" className="size-5" fill="none" stroke="currentColor" strokeWidth="2" aria-hidden="true">
      <path d="M3 7V4a1 1 0 0 1 1-1h12a1 1 0 0 1 1 1v12a1 1 0 0 1-1 1H4a1 1 0 0 1-1-1v-3M2 10h9" />
      <path d="M9.500 7.200 13 10l-3.500 2.800z" fill="currentColor" stroke="none" />
    </svg>
  );
}

function PinIcon() {
  return (
    <svg viewBox="0 0 42 50" className="h-[50px] w-[42px]" fill="none" stroke="#000" strokeWidth="1.400" strokeLinecap="round" strokeLinejoin="round" aria-hidden="true">
      <path d="M21 41C17 31 8 25 8 14a13 13 0 0 1 26 0c0 11-9 17-13 27z" />
      <circle cx="21" cy="13.500" r="5.500" />
      <path d="M15.500 33.500C7 34 1 37 1 41c0 4.500 9 8 20 8s20-3.500 20-8c0-4-6-7-14.500-7.500" />
      <path d="M8 42c2 1.500 5 2.500 8 3M19.500 45.200h2" />
    </svg>
  );
}

function RouteIcon() {
  return (
    <svg viewBox="0 0 52 54" className="h-[54px] w-[52px]" fill="none" stroke="#000" strokeWidth="2" strokeLinecap="round" strokeLinejoin="round" aria-hidden="true">
      <path d="M11 33C9 26 1 20 1 11.500a10 10.500 0 0 1 20 0C21 20 13 26 11 33z" />
      <circle cx="11" cy="12" r="4.200" />
      <circle cx="11" cy="34.500" r="2" />
      <path d="M41 50C39 43 31 37 31 28.500a10 10.500 0 0 1 20 0C51 37 43 43 41 50z" />
      <circle cx="41" cy="29" r="4.200" />
      <circle cx="41" cy="51" r="2" />
      <path d="M13 34.500h9.500a4 4 0 0 1 0 8.500H10a4 4 0 0 0 0 8h9M24 51h.5M29 51h10" />
    </svg>
  );
}

function Logo() {
  return (
    <svg viewBox="0 0 276 168" className="h-[168px] w-[276px] font-['Noto_Sans',sans-serif]" role="img" aria-label="Manager Faktur">
      <clipPath id="logo-shape">
        <rect width="276" height="168" rx="50" />
      </clipPath>
      <g clipPath="url(#logo-shape)">
        <rect width="276" height="168" fill="#173e82" />
        <path d="M72 53 L100 78 L213 59 L276 122 V168 H123 L67 112 L73 98 Z" fill="#153573" />
      </g>
      <text x="64" y="77" fontSize="35" fill="#fff">
        Manager
      </text>
      <text x="65" y="113" fontSize="32" fontWeight="700" fill="#fff">
        Faktur
      </text>
    </svg>
  );
}

function LinenTexture() {
  return (
    <svg className="absolute inset-0 h-full w-full" aria-hidden="true">
      <filter id="warp" x="0" y="0" width="100%" height="100%">
        <feTurbulence type="fractalNoise" baseFrequency="0.3 0.015" numOctaves="2" seed="4" />
        <feColorMatrix values="0 0 0 0 0.4  0 0 0 0 0.4  0 0 0 0 0.4  0.24 0 0 0 -0.09" />
      </filter>
      <filter id="weft" x="0" y="0" width="100%" height="100%">
        <feTurbulence type="fractalNoise" baseFrequency="0.015 0.3" numOctaves="2" seed="9" />
        <feColorMatrix values="0 0 0 0 0.4  0 0 0 0 0.4  0 0 0 0 0.4  0.24 0 0 0 -0.09" />
      </filter>
      <rect width="100%" height="100%" filter="url(#warp)" />
      <rect width="100%" height="100%" filter="url(#weft)" />
    </svg>
  );
}

/* ---------- page parts ---------- */

function NavItem({ icon, children }: { icon: ReactNode; children: ReactNode }) {
  return (
    <li>
      <a href="#" className="flex h-[53px] items-center gap-[15px] pl-4 text-sm text-[#1a4187]">
        <span className="flex w-5 justify-center text-xl">{icon}</span>
        {children}
      </a>
    </li>
  );
}

function Entry({ icon, children }: { icon: ReactNode; children: ReactNode }) {
  return (
    <li className="flex gap-[21px]">
      <div className="flex w-20 shrink-0 justify-center pt-[19px]">{icon}</div>
      <div className="min-w-0 flex-1 text-sm">{children}</div>
    </li>
  );
}

function PointName({ children }: { children: ReactNode }) {
  return <h3 className="font-[Inter,sans-serif] text-lg leading-6 text-[#222222]">{children}</h3>;
}

function PointWithRemove({ name, address }: { name: string; address: string }) {
  return (
    <Entry icon={<PinIcon />}>
      <div className="flex gap-[14px]">
        <div className="pt-0.5">
          <PointName>{name}</PointName>
        </div>
        <button type="button" aria-label={`Usuń ${name}`} className="flex h-9 w-[38px] items-center justify-center rounded bg-[#e0e1e2] text-sm text-[#666666]">
          <FaTimes />
        </button>
      </div>
      <p className="mt-1.5 max-w-[392px] leading-[14px] text-[#666666]">Dostarczyć pod adres: {address}</p>
      <p className="mt-[10px] leading-[14px] text-[#999999]">Znaleziono na mapie:TAK</p>
    </Entry>
  );
}

function SectionTitle({ children }: { children: ReactNode }) {
  return <h2 className="border-b border-[#d8d9da] pb-1 text-lg leading-6 text-[#222222]">{children}</h2>;
}

const CARD = 'relative rounded border border-[#d4d4d5] bg-white px-[14px] shadow-[0_1px_2px_rgba(34,36,38,0.12)]';

export default function App() {
  return (
    <div className="flex h-screen overflow-hidden border-t border-[#d9d9df] bg-[#f6f6f6] font-['Noto_Sans',sans-serif] text-[#222222]">
      <aside className="z-10 w-[422px] shrink-0 border-x border-t border-[#dedede] bg-white shadow-[2px_0_16px_rgba(0,0,0,0.1)]">
        <div className="flex h-[348px] items-center justify-center border-b border-[#e3e4e5] pt-[42px]">
          <Logo />
        </div>
        <p className="flex h-[82px] items-center border-b border-[#e3e4e5] pb-1 pl-4 text-[29px] text-[#1a4187]">Witaj: John Doe</p>
        <nav className="pt-[10px]">
          <ul>
            <NavItem icon={<BiMenu />}>Schowaj</NavItem>
            <NavItem icon={<BiMessageAltDetail />}>Przeglądaj wiadomości</NavItem>
            <NavItem icon={<BiUserPin />}>Moje dane</NavItem>
            <NavItem icon={<ExitIcon />}>Wyloguj</NavItem>
          </ul>
        </nav>
      </aside>

      <main className="relative min-w-0 flex-1 overflow-hidden pt-9 pr-[27px] pl-6">
        <LinenTexture />
        <div className={`grid h-[74px] grid-cols-[1fr_auto_1fr] items-center ${CARD}`}>
          <div className="flex gap-[14px]">
            <button type="button" aria-label="Wstecz" className="flex h-11 w-[75px] items-center justify-center rounded bg-[#e0e1e2] text-lg text-[#555555]">
              <BiLeftArrowAlt />
            </button>
            <button type="button" aria-label="Strona główna" className="flex h-11 w-[75px] items-center justify-center rounded bg-[#e0e1e2] text-lg text-[#555555]">
              <BiHomeAlt />
            </button>
          </div>
          <nav aria-label="Ścieżka" className="text-sm">
            Jesteś tutaj:{' '}
            {['Delivery', 'Road', 'Plan'].map((crumb) => (
              <span key={crumb}>
                <a href="#" className="text-[#4183c4]">
                  {crumb}
                </a>
                <span className="text-[#bbbbbb]"> / </span>
              </span>
            ))}
          </nav>
        </div>

        <section className={`mt-10 pt-5 pb-40 ${CARD}`}>
          <h1 className="border-b border-[#d8d9da] pb-[3px] text-[28px] leading-10">Planowanie trasy</h1>
          <div className="mt-7 grid grid-cols-[507fr_865fr] gap-7">
            <div className="-mt-1">
              <SectionTitle>Znalezione punkty</SectionTitle>
              <ul className="flex flex-col gap-[27px] pt-[17px]">
                <PointWithRemove name="F20009024/20" address="pl. Srebrny, Grabiszyńska, Gajowice, Wrocław, Osiedle Gajowice, Wrocław, województwo dolnośląskie, 53-436, Polska" />
                <PointWithRemove name="F20009027/20" address="PRZEMYSŁOWA 47 28-300 JĘDRZEJÓW" />
                <Entry icon={<PinIcon />}>
                  <PointName>F20009028/20</PointName>
                  <p className="mt-[5px] leading-[14px] text-[#666666]">Dostarczyć pod adres: Brak informacji</p>
                  <div className="mt-[11px] flex items-center gap-[23px]">
                    <p className="text-[#999999]">Znaleziono na mapie:NIE</p>
                    <button type="button" className="h-9 w-[85px] rounded bg-[#e0e1e2] text-[#666666]">
                      Edytuj
                    </button>
                  </div>
                </Entry>
              </ul>
              <div className="mt-[30px]">
                <SectionTitle>Akcje</SectionTitle>
              </div>
              <ul className="pt-[18px]">
                <Entry icon={<RouteIcon />}>
                  <h3 className="text-lg leading-6 text-[#222222]">Planuj trasę</h3>
                  <p className="leading-[21px] text-[#666666]">Wszystkie punkty dodane: NIE</p>
                  <p className="leading-[21px] text-[#666666]">Wprowadzono min. 5 punktów: NIE</p>
                  <button type="button" className="mt-2 h-9 w-[74px] rounded bg-[#f0a0a0] font-semibold text-white">
                    Start
                  </button>
                </Entry>
              </ul>
            </div>

            <div className="relative self-start">
              <CityMap />
              <div className="absolute top-[10px] left-[10px] flex flex-col items-start gap-[10px]">
                <div className="w-[26px] rounded bg-white shadow-[0_1px_5px_rgba(0,0,0,0.65)]">
                  <button type="button" aria-label="Przybliż" className="flex h-[26px] w-full items-center justify-center border-b border-[#cccccc]">
                    <svg viewBox="0 0 10 10" className="size-[10px]" stroke="#000" strokeWidth="1.500" aria-hidden="true">
                      <path d="M1 5h8M5 1v8" />
                    </svg>
                  </button>
                  <button type="button" aria-label="Oddal" className="flex h-[26px] w-full items-center justify-center">
                    <svg viewBox="0 0 10 10" className="size-[10px]" stroke="#000" strokeWidth="1.500" aria-hidden="true">
                      <path d="M0 5h10" />
                    </svg>
                  </button>
                </div>
                <button type="button" aria-label="Pełny ekran" className="flex size-[26px] items-center justify-center rounded bg-white shadow-[0_1px_5px_rgba(0,0,0,0.65)]">
                  <svg viewBox="0 0 16 16" className="size-4" fill="none" stroke="#333" strokeWidth="2" aria-hidden="true">
                    <path d="M1 5V1h4M11 1h4v4M15 11v4h-4M5 15H1v-4" />
                  </svg>
                </button>
                <div className="flex h-10 w-[270px] items-center rounded-sm bg-white pr-2 pl-[5px] shadow-[0_1px_5px_rgba(0,0,0,0.65)]">
                  <svg viewBox="0 0 16 16" className="size-4 shrink-0" fill="none" stroke="#000" strokeWidth="2" aria-hidden="true">
                    <circle cx="7" cy="7" r="5.800" />
                    <path d="m11 11 4.500 4.500" />
                  </svg>
                  <label htmlFor="address" className="sr-only">
                    Szukaj adresu
                  </label>
                  <input id="address" defaultValue="Oleśnicka 15b Wrocław" className="ml-[6px] min-w-0 flex-1 bg-transparent text-sm text-[#333333] outline-none" />
                  <button type="button" aria-label="Wyczyść">
                    <svg viewBox="0 0 10 10" className="size-[10px]" stroke="#000" strokeWidth="1.200" aria-hidden="true">
                      <path d="m0 0 10 10M10 0 0 10" />
                    </svg>
                  </button>
                </div>
              </div>
              <div className="absolute top-[318px] left-[275px] flex h-16 w-[183px] items-center rounded-xl bg-white px-5 shadow-[0_3px_14px_rgba(0,0,0,0.4)]">
                <button type="button" className="h-9 w-[139px] rounded bg-[#db2828] text-sm font-semibold text-white">
                  Dodaj do trasy
                </button>
                <button type="button" aria-label="Zamknij" className="absolute top-2 right-[7px]">
                  <svg viewBox="0 0 8 8" className="size-2" stroke="#c3c3c3" strokeWidth="1.800" aria-hidden="true">
                    <path d="m0 0 8 8M8 0 0 8" />
                  </svg>
                </button>
                <svg viewBox="0 0 24 12" className="absolute top-16 left-[79px] h-3 w-6" aria-hidden="true">
                  <path d="M0 0h24L12 11z" fill="#fff" />
                </svg>
              </div>
            </div>
          </div>
        </section>
      </main>

      <div aria-hidden="true" className="flex w-[17px] shrink-0 flex-col items-center justify-between bg-[#f1f1f1]">
        <svg viewBox="0 0 17 17" className="size-[17px] shrink-0">
          <path d="M5 10h7L8.500 6z" fill="#505050" />
        </svg>
        <div className="mb-auto h-[72.2%] w-[13px] bg-[#c1c1c1]" />
        <svg viewBox="0 0 17 17" className="size-[17px] shrink-0">
          <path d="M5 7h7l-3.500 4z" fill="#505050" />
        </svg>
      </div>
    </div>
  );
}
